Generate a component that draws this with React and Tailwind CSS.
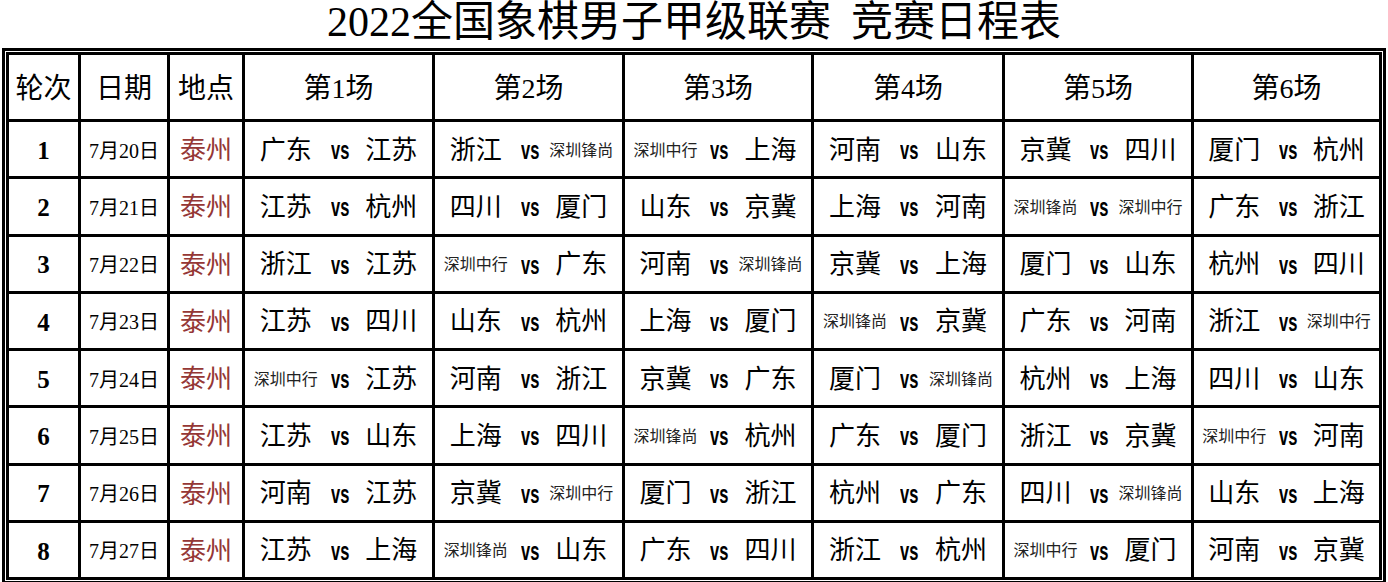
import React from "react";

const serif = "font-['Liberation_Serif','Noto_Sans_CJK_SC',serif]";

const rounds = [
  ["7月20日", [["广东", "江苏"], ["浙江", "深圳锋尚"], ["深圳中行", "上海"], ["河南", "山东"], ["京冀", "四川"], ["厦门", "杭州"]]],
  ["7月21日", [["江苏", "杭州"], ["四川", "厦门"], ["山东", "京冀"], ["上海", "河南"], ["深圳锋尚", "深圳中行"], ["广东", "浙江"]]],
  ["7月22日", [["浙江", "江苏"], ["深圳中行", "广东"], ["河南", "深圳锋尚"], ["京冀", "上海"], ["厦门", "山东"], ["杭州", "四川"]]],
  ["7月23日", [["江苏", "四川"], ["山东", "杭州"], ["上海", "厦门"], ["深圳锋尚", "京冀"], ["广东", "河南"], ["浙江", "深圳中行"]]],
  ["7月24日", [["深圳中行", "江苏"], ["河南", "浙江"], ["京冀", "广东"], ["厦门", "深圳锋尚"], ["杭州", "上海"], ["四川", "山东"]]],
  ["7月25日", [["江苏", "山东"], ["上海", "四川"], ["深圳锋尚", "杭州"], ["广东", "厦门"], ["浙江", "京冀"], ["深圳中行", "河南"]]],
  ["7月26日", [["河南", "江苏"], ["京冀", "深圳中行"], ["厦门", "浙江"], ["杭州", "广东"], ["四川", "深圳锋尚"], ["山东", "上海"]]],
  ["7月27日", [["江苏", "上海"], ["深圳锋尚", "山东"], ["广东", "四川"], ["浙江", "杭州"], ["深圳中行", "厦门"], ["河南", "京冀"]]],
];

function Team({ name }) {
  if (name.length > 2) {
    return <span className="text-[16px] leading-none text-[#222]">{name}</span>;
  }
  return <span className="text-[26px] leading-none">{name}</span>;
}

function Match({ a, b }) {
  return (
    <div className="grid grid-cols-[1fr_24px_1fr] items-center bg-white pt-[3px] text-center">
      <Team name={a} />
      <span className="inline-block scale-x-[0.66] font-['Liberation_Sans',sans-serif] text-[25px] font-bold leading-none">
        vs
      </span>
      <Team name={b} />
    </div>
  );
}

function Head({ children }) {
  return <div className="flex items-center justify-center bg-white pt-[3px] text-[28px]">{children}</div>;
}

export default function App() {
  return (
    <div className={`h-[582px] w-[1388px] overflow-hidden bg-white text-black ${serif}`}>
      <h1 className="h-[48px] text-center text-[42px] font-normal leading-[44px]">
        2022全国象棋男子甲级联赛<span className="inline-block w-[20px]"></span>竞赛日程表
      </h1>
      <div className="ml-[2px] w-[1384px] border-[3px] border-black p-[1px]">
        <div className="grid grid-cols-[69px_86px_72px_187px_187px_186px_188px_186px_185px] grid-rows-[64px_repeat(8,54.25px)] gap-[3px] bg-black p-[3px]">
          <Head>轮次</Head>
          <Head>日期</Head>
          <Head>地点</Head>
          {[1, 2, 3, 4, 5, 6].map((n) => (
            <Head key={n}>第{n}场</Head>
          ))}
          {rounds.map(([date, games], i) => (
            <React.Fragment key={date}>
              <div className="flex items-center justify-center bg-white pt-[3px] text-[25px] font-bold">{i + 1}</div>
              <div className="flex items-center justify-center bg-white pt-[3px] text-[20px]">{date}</div>
              <div className="flex items-center justify-center bg-white pt-[3px] text-[26px] text-[#953735]">泰州</div>
              {games.map(([a, b], j) => (
                <Match key={j} a={a} b={b} />
              ))}
            </React.Fragment>
          ))}
        </div>
      </div>
    </div>
  );
}
